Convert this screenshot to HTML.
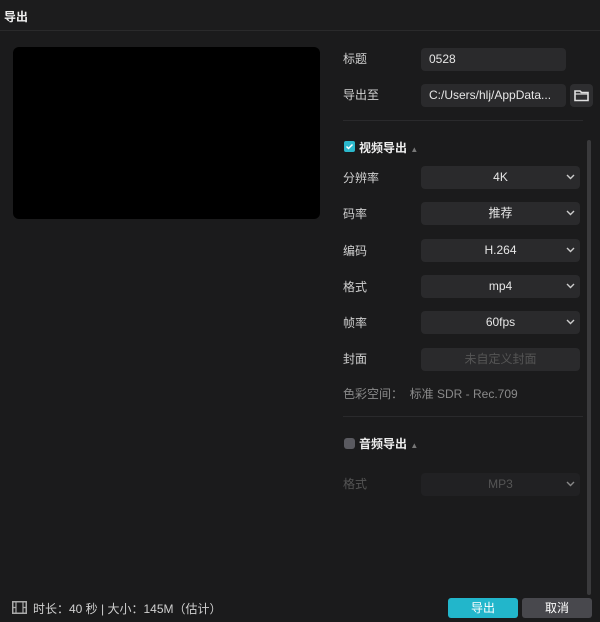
<!DOCTYPE html>
<html><head><meta charset="utf-8"><style>
*{margin:0;padding:0;box-sizing:border-box}
body{width:600px;height:622px;background:#1b1b1c;font-family:"Liberation Sans","Noto Sans CJK SC",sans-serif;color:#d8d8d8;position:relative;overflow:hidden;font-size:12px}
.a{position:absolute}
.lbl{position:absolute;left:343px;font-size:12px;color:#cfcfcf;line-height:16px}
.box{position:absolute;left:421px;width:159px;height:23px;background:#2a2a2c;border-radius:4px;text-align:center;line-height:23px;color:#e6e6e6;font-size:12px}
.box svg{position:absolute;right:5px;top:8px}
</style></head><body>
<div class="a" style="left:0;top:0;width:600px;height:31px;background:#1c1c1d;border-bottom:1px solid #2a2a2b"></div>
<div class="a" style="left:4px;top:8px;font-size:12px;color:#eee;font-weight:bold">导出</div>
<div class="a" style="left:13px;top:47px;width:307px;height:172px;background:#000;border-radius:6px"></div>

<div class="lbl" style="top:51px">标题</div>
<div class="box" style="top:48px;width:145px;text-align:left;padding-left:8px">0528</div>
<div class="lbl" style="top:87px">导出至</div>
<div class="box" style="top:84px;width:145px;text-align:left;padding-left:8px">C:/Users/hlj/AppData...</div>
<div class="a" style="left:570px;top:84px;width:23px;height:23px;background:#2e2e30;border-radius:4px">
<svg width="23" height="23" viewBox="0 0 23 23"><path d="M5 7h5l1.5 1.5H18v8H5z" fill="none" stroke="#e0e0e0" stroke-width="1.6"/><path d="M5 10h13" stroke="#e0e0e0" stroke-width="1.2"/></svg></div>
<div class="a" style="left:343px;top:120px;width:240px;height:1px;background:#2a2a2c"></div>

<div class="a" style="left:344px;top:141px;width:11px;height:11px;background:#2bb8cc;border-radius:2px"><svg width="11" height="11"><path d="M2.5 5.5l2 2 4-4" stroke="#fff" stroke-width="1.5" fill="none"/></svg></div>
<div class="a" style="left:359px;top:139px;font-weight:bold;color:#eee">视频导出 <span style="font-size:8px;color:#777">▲</span></div>

<div class="lbl" style="top:170px">分辨率</div><div class="box" style="top:166px">4K<svg width="9" height="6"><path d="M1 1l3.5 3.5L8 1" stroke="#ccc" stroke-width="1.4" fill="none"/></svg></div>
<div class="lbl" style="top:206px">码率</div><div class="box" style="top:202px">推荐<svg width="9" height="6"><path d="M1 1l3.5 3.5L8 1" stroke="#ccc" stroke-width="1.4" fill="none"/></svg></div>
<div class="lbl" style="top:243px">编码</div><div class="box" style="top:239px">H.264<svg width="9" height="6"><path d="M1 1l3.5 3.5L8 1" stroke="#ccc" stroke-width="1.4" fill="none"/></svg></div>
<div class="lbl" style="top:279px">格式</div><div class="box" style="top:275px">mp4<svg width="9" height="6"><path d="M1 1l3.5 3.5L8 1" stroke="#ccc" stroke-width="1.4" fill="none"/></svg></div>
<div class="lbl" style="top:315px">帧率</div><div class="box" style="top:311px">60fps<svg width="9" height="6"><path d="M1 1l3.5 3.5L8 1" stroke="#ccc" stroke-width="1.4" fill="none"/></svg></div>
<div class="lbl" style="top:351px">封面</div><div class="box" style="top:348px;color:#555">未自定义封面</div>
<div class="lbl" style="top:386px;color:#8a8a8a">色彩空间：&nbsp; 标准 SDR - Rec.709</div>
<div class="a" style="left:343px;top:416px;width:240px;height:1px;background:#2a2a2c"></div>

<div class="a" style="left:344px;top:438px;width:11px;height:11px;background:#5a5a60;border-radius:3px"></div>
<div class="a" style="left:359px;top:435px;font-weight:bold;color:#eee">音频导出 <span style="font-size:8px;color:#777">▲</span></div>
<div class="lbl" style="top:476px;color:#555">格式</div><div class="box" style="top:473px;color:#555;background:#212123">MP3<svg width="9" height="6"><path d="M1 1l3.5 3.5L8 1" stroke="#888" stroke-width="1.4" fill="none"/></svg></div>

<div class="a" style="left:587px;top:140px;width:4px;height:455px;background:#3a3a3c;border-radius:2px"></div>

<svg class="a" style="left:12px;top:601px" width="15" height="13" viewBox="0 0 15 13"><rect x="0.75" y="0.75" width="13.5" height="11.5" fill="none" stroke="#aaa" stroke-width="1.5"/><path d="M4 1v11M11 1v11M1 6.5h3M11 6.5h3" stroke="#aaa" stroke-width="1.2"/></svg>
<div class="a" style="left:33px;top:600px;color:#d0d0d0">时长：40 秒 | 大小：145M（估计）</div>
<div class="a" style="left:448px;top:598px;width:70px;height:20px;background:#22b6cb;border-radius:3px;text-align:center;line-height:20px;color:#fff">导出</div>
<div class="a" style="left:522px;top:598px;width:70px;height:20px;background:#48484d;border-radius:3px;text-align:center;line-height:20px;color:#fff">取消</div>
</body></html>
